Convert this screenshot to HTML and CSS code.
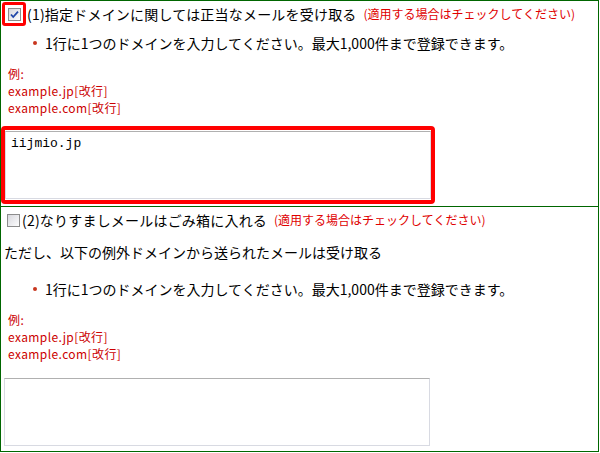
FILE: index.html
```html
<!DOCTYPE html>
<html lang="ja">
<head>
<meta charset="utf-8">
<link rel="stylesheet" href="styles.css">
</head>
<body>
<div class="frame">
  <section class="sec sec1">
    <div class="head">
      <span class="hl">
        <svg class="cb" width="13" height="13" viewBox="0 0 13 13">
          <defs><linearGradient id="g1" x1="0" y1="0" x2="1" y2="1"><stop offset="0" stop-color="#d6d6dc"/><stop offset="1" stop-color="#ffffff"/></linearGradient></defs>
          <rect x="0.5" y="0.5" width="12" height="12" fill="url(#g1)" stroke="#8c8c8c"/>
          <path d="M3 6.5 L5.2 9 L10 3.6" fill="none" stroke="#2146a8" stroke-width="1.8"/>
        </svg>
      </span>
      <span class="label">(1)指定ドメインに関しては正当なメールを受け取る</span>
      <span class="note">(適用する場合はチェックしてください)</span>
    </div>
    <ul class="hint"><li><span class="dot"></span>1行に1つのドメインを入力してください。最大1,000件まで登録できます。</li></ul>
    <div class="ex ex1"><div>例:</div><div>example.jp[改行]</div><div>example.com[改行]</div></div>
    <div class="ta-hl"><textarea class="ta" readonly>iijmio.jp</textarea></div>
  </section>
  <section class="sec sec2">
    <div class="head head2">
      <svg class="cb" width="13" height="13" viewBox="0 0 13 13">
        <defs><linearGradient id="g2" x1="0" y1="0" x2="1" y2="1"><stop offset="0" stop-color="#d6d6dc"/><stop offset="1" stop-color="#ffffff"/></linearGradient></defs>
        <rect x="0.5" y="0.5" width="12" height="12" fill="url(#g2)" stroke="#8c8c8c"/>
      </svg>
      <span class="label">(2)なりすましメールはごみ箱に入れる</span>
      <span class="note">(適用する場合はチェックしてください)</span>
    </div>
    <p class="sub">ただし、以下の例外ドメインから送られたメールは受け取る</p>
    <ul class="hint hint2"><li><span class="dot"></span>1行に1つのドメインを入力してください。最大1,000件まで登録できます。</li></ul>
    <div class="ex ex2"><div>例:</div><div>example.jp[改行]</div><div>example.com[改行]</div></div>
    <textarea class="ta ta2" readonly></textarea>
  </section>
</div>
</body>
</html>
```

FILE: styles.css
```css
html, body {
  margin: 0;
  padding: 0;
  background: #ffffff;
}
body {
  font-family: "Noto Sans CJK JP", "Liberation Sans", sans-serif;
  color: #000000;
}
.frame {
  width: 597px;
  height: 450px;
  border: 1px solid #006600;
  display: flex;
  flex-direction: column;
}
.sec1 {
  box-sizing: border-box;
  height: 206px;
  border-bottom: 1px solid #006600;
}
.sec2 {
  flex: 1;
}
.head {
  display: flex;
  align-items: center;
  margin: 1px 0 0 1px;
  height: 24px;
}
.hl {
  box-sizing: border-box;
  width: 24px;
  height: 24px;
  border: 3px solid #ff0000;
  border-radius: 3px;
  display: flex;
  align-items: center;
  justify-content: center;
}
.cb {
  display: block;
  flex: none;
}
.label {
  font-size: 14px;
  line-height: 20px;
  margin-left: 1px;
  letter-spacing: 0.2px;
}
.note {
  font-size: 12px;
  line-height: 20px;
  color: #e00000;
  margin-left: 7px;
}
.hint {
  list-style: none;
  margin: 7px 0 0 0;
  padding: 0 0 0 32px;
}
.hint li {
  display: flex;
  align-items: center;
  font-size: 14px;
  line-height: 20px;
}
.dot {
  width: 4px;
  height: 4px;
  border-radius: 50%;
  background: #c8361e;
  margin-right: 8px;
  flex: none;
}
.ex {
  color: #cc0000;
  font-size: 12px;
  letter-spacing: 0.4px;
  line-height: 17px;
  padding-left: 7px;
}
.ex div {
  height: 17px;
}
.ex1 {
  margin-top: 12px;
}
.ta-hl {
  margin-top: 10px;
  width: 434px;
  box-sizing: border-box;
  border: 4px solid #ff0000;
  border-radius: 4px;
  padding: 1px 1px 1px 0;
}
.ta {
  display: block;
  box-sizing: border-box;
  width: 426px;
  height: 68px;
  margin: 0;
  border: 1px solid #d8dae2;
  border-top-color: #b0b0b0;
  resize: none;
  outline: none;
  font-family: "Liberation Mono", "DejaVu Sans Mono", monospace;
  font-size: 13px;
  line-height: 16px;
  padding: 4px 5px;
  color: #000000;
  background: #ffffff;
  overflow: hidden;
}
.head2 {
  margin: 6px 0 0 6px;
  height: 14px;
}
.head2 .label {
  margin-left: 2px;
}
.sub {
  margin: 15px 0 0 3px;
  font-size: 14px;
  line-height: 20px;
}
.hint2 {
  margin-top: 17px;
}
.ex2 {
  margin-top: 12px;
}
.ta2 {
  margin: 16px 0 0 3px;
}
```
